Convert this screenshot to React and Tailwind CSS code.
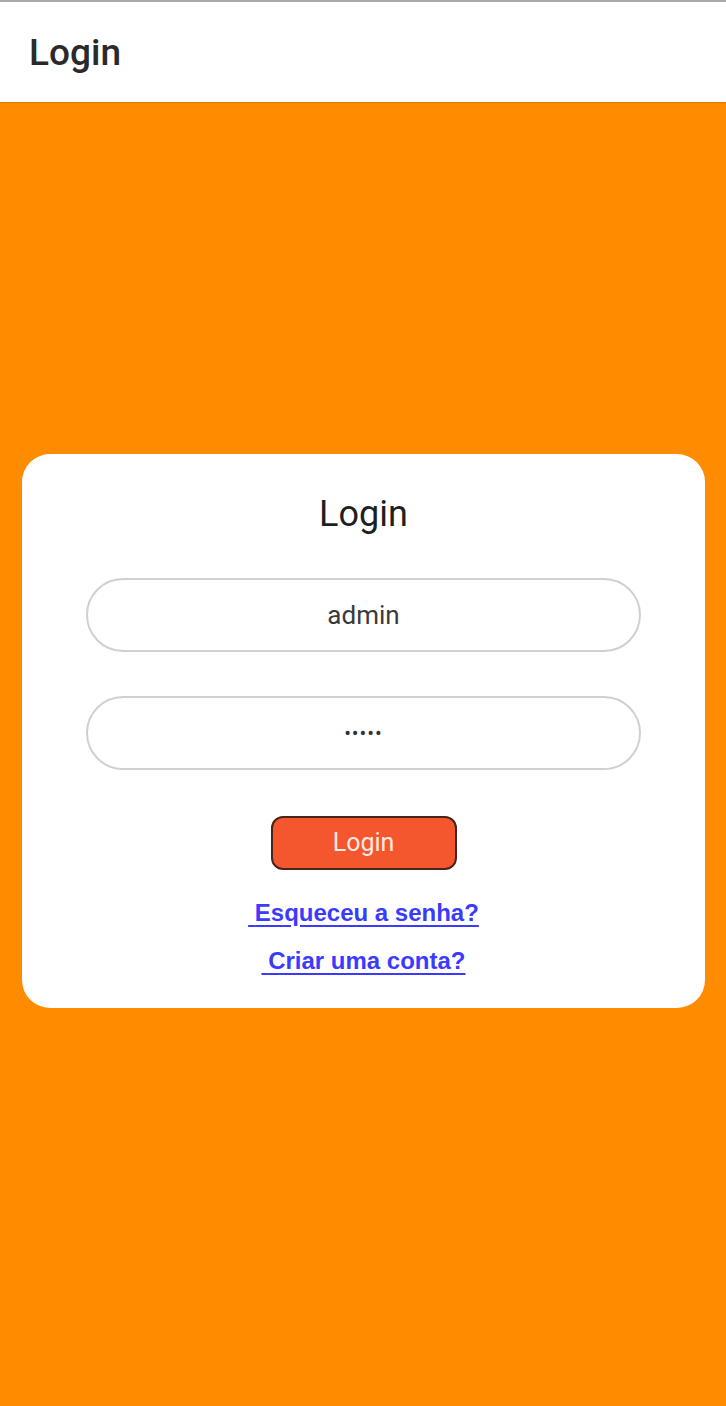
const App = () => {
  return (
    <div className="min-h-[1406px] flex flex-col bg-[#ff8c00] font-[Roboto,'Noto_Sans',sans-serif]">
      {/* Top bar */}
      <header className="h-[102px] bg-white border-t-2 border-[#a9a9a9] flex items-center px-[29px] shadow-[0_1px_2px_rgba(0,0,0,0.15)]">
        <h1 className="text-[37px] leading-none font-medium text-[#2a2a2a]">Login</h1>
      </header>

      {/* Content */}
      <main className="flex-1 px-[22px] pt-[352px]">
        <div className="bg-white rounded-[28px] w-[683px] pt-[40px] pb-[33px] flex flex-col items-center">
          <h2 className="text-[36px] leading-[40px] text-[#1f1f1f]">Login</h2>

          <input
            type="text"
            defaultValue="admin"
            className="mt-[44px] w-[555px] h-[74px] rounded-full border-2 border-[#d0d0d0] bg-white text-center text-[26px] text-[#3a3a3a] outline-none font-[Roboto,sans-serif]"
          />
          <input
            type="password"
            defaultValue="admin"
            className="mt-[44px] w-[555px] h-[74px] rounded-full border-2 border-[#d0d0d0] bg-white text-center text-[20px] tracking-[1px] text-[#333] outline-none font-[Roboto,sans-serif]"
          />

          <button className="mt-[46px] w-[186px] h-[54px] rounded-[12px] bg-[#f4572e] border-2 border-[#4a2418] text-[25px] text-[#ffe9e2] font-[Roboto,sans-serif]">
            Login
          </button>

          <a
            href="#"
            className="mt-[29px] leading-[28px] text-[24px] font-bold text-[#3b3bff] underline underline-offset-[4px] font-['Liberation_Sans',Arial,sans-serif]"
          >
            {'\u00a0'}Esqueceu a senha?
          </a>
          <a
            href="#"
            className="mt-[20px] leading-[28px] text-[24px] font-bold text-[#3b3bff] underline underline-offset-[4px] font-['Liberation_Sans',Arial,sans-serif]"
          >
            {'\u00a0'}Criar uma conta?
          </a>
        </div>
      </main>
    </div>
  );
};

export default App;
